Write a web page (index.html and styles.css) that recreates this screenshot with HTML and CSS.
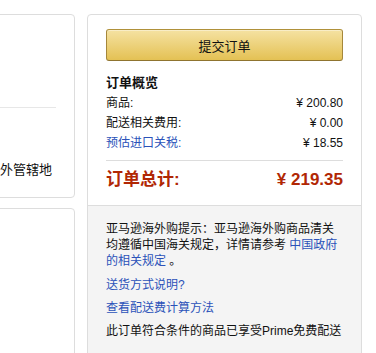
FILE: index.html
```html
<!DOCTYPE html>
<html lang="zh-CN">
<head>
<meta charset="utf-8">
<title>订单概览</title>
<link rel="stylesheet" href="styles.css">
</head>
<body>
<div class="page">
  <div class="left-col">
    <div class="box box-first">
      <div class="box-spacer"></div>
      <div class="divider"></div>
      <p class="left-text">收货地址位于境外管辖地</p>
    </div>
    <div class="box box-second"></div>
  </div>
  <div class="right-col">
    <div class="summary">
      <div class="summary-top">
        <button class="btn-primary" type="button">提交订单</button>
        <h3 class="summary-title">订单概览</h3>
        <div class="row"><span>商品:</span><span class="amt">¥ 200.80</span></div>
        <div class="row"><span>配送相关费用:</span><span class="amt">¥ 0.00</span></div>
        <div class="row"><a class="link" href="#">预估进口关税:</a><span class="amt">¥ 18.55</span></div>
        <div class="total-row"><span>订单总计:</span><span class="total-amt">¥ 219.35</span></div>
      </div>
      <div class="summary-bottom">
        <p class="note">亚马逊海外购提示：亚马逊海外购商品清关均遵循中国海关规定，详情请参考 <a class="link" href="#">中国政府的相关规定</a> 。</p>
        <p class="note-line"><a class="link" href="#">送货方式说明?</a></p>
        <p class="note-line"><a class="link" href="#">查看配送费计算方法</a></p>
        <p class="note-line">此订单符合条件的商品已享受Prime免费配送</p>
      </div>
    </div>
  </div>
</div>
</body>
</html>
```

FILE: styles.css
```css
html, body {
  margin: 0;
  padding: 0;
  background: #fff;
  overflow: hidden;
}

body {
  font-family: "Liberation Sans", "Noto Sans CJK SC", sans-serif;
  color: #111;
  font-size: 12px;
}

.page {
  display: flex;
  align-items: flex-start;
  gap: 12px;
  margin-left: -110px;
  padding-top: 14px;
}

.left-col {
  flex: 0 0 185px;
  display: flex;
  flex-direction: column;
  gap: 10px;
}

.box {
  border: 1px solid #ddd;
  border-radius: 4px;
  padding: 0 18px;
}

.box-first {
  padding-bottom: 18px;
}

.box-spacer {
  height: 92px;
}

.divider {
  height: 1px;
  background: #e7e7e7;
}

.left-text {
  margin: 52px 0 0;
  font-size: 13px;
  line-height: 19px;
  white-space: nowrap;
}

.box-second {
  height: 200px;
}

.right-col {
  flex: 0 0 275px;
}

.summary {
  border: 1px solid #ddd;
  border-radius: 4px 4px 0 0;
  height: 400px;
  box-sizing: border-box;
  display: flex;
  flex-direction: column;
}

.summary-top {
  padding: 14px 18px 13px;
}

.btn-primary {
  display: block;
  width: 100%;
  height: 32px;
  box-sizing: border-box;
  margin: 0;
  padding: 0;
  border: 1px solid;
  border-color: #b0913a #a5873a #8f742f;
  border-radius: 3px;
  background: linear-gradient(to bottom, #f5e2a2, #e4c154);
  box-shadow: inset 0 1px 0 rgba(255, 255, 255, 0.4);
  font-family: "Liberation Sans", "Noto Sans CJK SC", sans-serif;
  font-size: 13px;
  color: #111;
  cursor: pointer;
}

.summary-title {
  margin: 12px 0 0;
  font-size: 13px;
  font-weight: 700;
  line-height: 20px;
}

.row {
  display: flex;
  justify-content: space-between;
  line-height: 20px;
}

.link {
  color: #2b52b9;
  text-decoration: none;
}

.total-row {
  display: flex;
  justify-content: space-between;
  margin-top: 7px;
  padding-top: 7px;
  border-top: 1px solid #ddd;
  font-size: 17px;
  font-weight: 700;
  line-height: 24px;
  color: #b12704;
}

.summary-bottom {
  flex: 1;
  border-top: 1px solid #ddd;
  background: #f4f4f4;
  padding: 15px 18px 20px;
}

.note {
  margin: 0;
  line-height: 16px;
}

.note-line {
  margin: 8px 0 0;
  line-height: 16px;
  white-space: nowrap;
}

.note-line + .note-line {
  margin-top: 7px;
}
```
